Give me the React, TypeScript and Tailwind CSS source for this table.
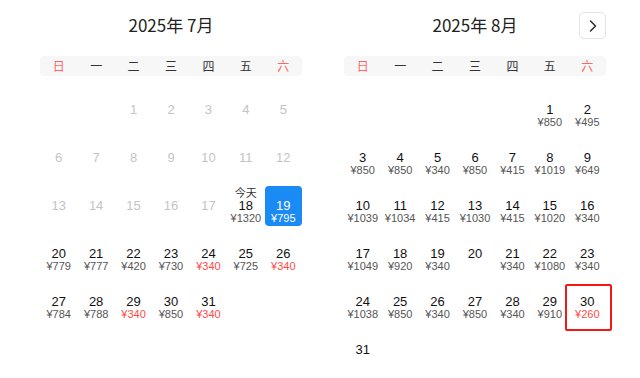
import { ReactNode } from "react";

type Day = {
    d: number;
    price?: string;
    red?: boolean;
    past?: boolean;
    today?: boolean;
    selected?: boolean;
    boxed?: boolean;
};

const WEEK = ["日", "一", "二", "三", "四", "五", "六"];

const july: (Day | null)[] = [
    null, null,
    ...Array.from({ length: 17 }, (_, i) => ({ d: i + 1, past: true })),
    { d: 18, price: "¥1320", today: true },
    { d: 19, price: "¥795", selected: true },
    { d: 20, price: "¥779" },
    { d: 21, price: "¥777" },
    { d: 22, price: "¥420" },
    { d: 23, price: "¥730" },
    { d: 24, price: "¥340", red: true },
    { d: 25, price: "¥725" },
    { d: 26, price: "¥340", red: true },
    { d: 27, price: "¥784" },
    { d: 28, price: "¥788" },
    { d: 29, price: "¥340", red: true },
    { d: 30, price: "¥850" },
    { d: 31, price: "¥340", red: true },
];

const augPrices: Record<number, string> = {
    1: "¥850", 2: "¥495", 3: "¥850", 4: "¥850", 5: "¥340", 6: "¥850", 7: "¥415", 8: "¥1019", 9: "¥649",
    10: "¥1039", 11: "¥1034", 12: "¥415", 13: "¥1030", 14: "¥415", 15: "¥1020", 16: "¥340",
    17: "¥1049", 18: "¥920", 19: "¥340", 21: "¥340", 22: "¥1080", 23: "¥340",
    24: "¥1038", 25: "¥850", 26: "¥340", 27: "¥850", 28: "¥340", 29: "¥910", 30: "¥260",
};

const august: (Day | null)[] = [
    null, null, null, null, null,
    ...Array.from({ length: 31 }, (_, i) => {
        const d = i + 1;
        return { d, price: augPrices[d], red: d === 30, boxed: d === 30 };
    }),
];

function Cell({ day }: { day: Day | null }) {
    if (!day) return <div className="h-[40px]" />;
    const box = day.selected ? "bg-[#1a8af5] rounded-[4px] text-white" : "";
    const num = day.selected ? "text-white" : day.past ? "text-[#c4c4c4]" : "text-[#111]";
    const price = day.selected ? "text-white" : day.red ? "text-[#ff4a4a]" : "text-[#555]";
    return (
        <div className={`relative h-[40px] flex flex-col items-center ${box}`}>
            <div className="h-[12px] mb-[1px] leading-[12px] text-[11px] text-[#333] font-['Noto_Sans_CJK_SC',sans-serif]">
                {day.today ? "今天" : ""}
            </div>
            <div className={`h-[13px] leading-[13px] text-[13px] ${num}`}>{day.d}</div>
            {day.price && <div className={`h-[13px] leading-[13px] text-[11px] ${price}`}>{day.price}</div>}
            {day.boxed && (
                <div className="absolute left-[-4px] right-[-6px] top-[2px] bottom-[-9px] border-2 border-[#f21818] rounded-[2px]" />
            )}
        </div>
    );
}

function Month({ title, days, extra }: { title: string; days: (Day | null)[]; extra?: ReactNode }) {
    return (
        <div className="relative w-[262px] pt-[13px]">
            {extra}
            <div className="h-[24px] leading-[24px] text-center text-[17px] text-[#222] font-['Noto_Sans_CJK_SC',sans-serif]">
                {title}
            </div>
            <div className="mt-[19px] h-[20px] grid grid-cols-7 items-center bg-[#f7f7f7] rounded-[4px] text-[12px] font-['Noto_Sans_CJK_SC',sans-serif]">
                {WEEK.map((w, i) => (
                    <div key={w} className={`text-center leading-[20px] ${i === 0 || i === 6 ? "text-[#ff6666]" : "text-[#333]"}`}>
                        {w}
                    </div>
                ))}
            </div>
            <div className="mt-[14px] grid grid-cols-7 gap-y-[8px] font-['Liberation_Sans',Arial,sans-serif]">
                {days.map((d, i) => (
                    <Cell key={i} day={d} />
                ))}
            </div>
        </div>
    );
}

export default function App() {
    return (
        <div className="w-[640px] h-[378px] bg-white flex pl-[40px] gap-[42px] overflow-hidden">
            <Month title="2025年 7月" days={july} />
            <Month
                title="2025年 8月"
                days={august}
                extra={
                    <button className="absolute right-0 top-[12px] w-[27px] h-[27px] flex items-center justify-center border border-[#e3e3e3] rounded-[5px] bg-white">
                        <svg width="10" height="14" viewBox="0 0 10 14" fill="none">
                            <path d="M2.5 2 L7.5 7 L2.5 12" stroke="#333" strokeWidth="1.6" strokeLinecap="round" strokeLinejoin="round" />
                        </svg>
                    </button>
                }
            />
        </div>
    );
}
